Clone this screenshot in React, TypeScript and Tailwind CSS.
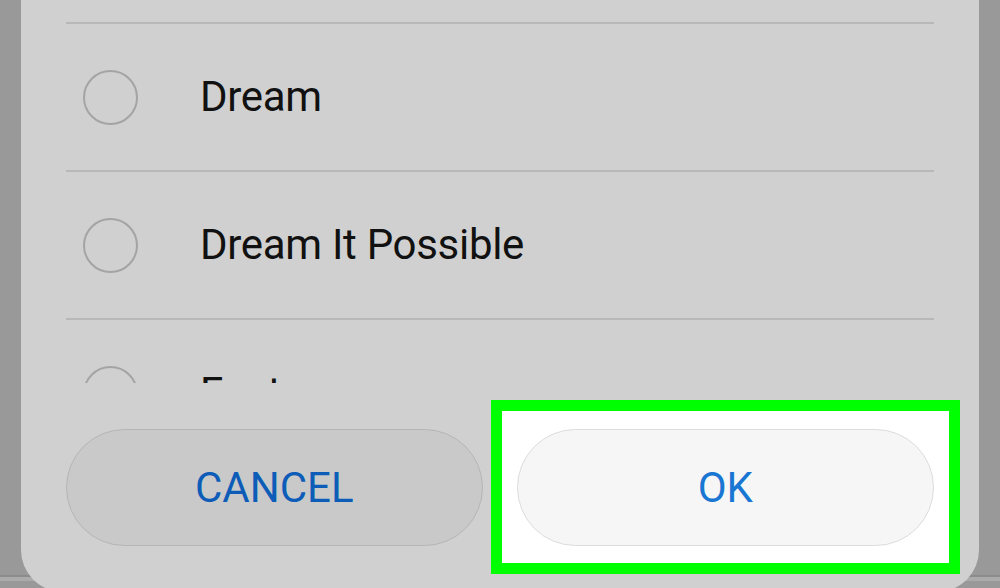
import React from "react";

const items = ["Dream", "Dream It Possible", "Fantasy"];

function Row({ label }: { label: string }) {
  return (
    <div className="h-[146px] flex items-center shrink-0">
      <div className="ml-[17px] w-[55px] h-[55px] rounded-full border-2 border-[#a4a4a4] shrink-0" />
      <div className="ml-[62px] text-[42px] leading-none text-[#111111] tracking-[-0.3px]">{label}</div>
    </div>
  );
}

export default function App() {
  return (
    <div
      className="relative w-[1000px] h-[588px] overflow-hidden bg-[#999999] flex"
      style={{ fontFamily: "Roboto, 'Liberation Sans', sans-serif" }}
    >
      <div className="absolute left-0 right-0 top-[575px] h-[2px] bg-[#8c8c8c]" />
      <div className="absolute left-0 right-0 top-[577px] h-[4px] bg-[#ababab]" />
      <div className="relative ml-[21px] w-[958px] h-[592px] shrink-0 bg-[#d0d0d0] rounded-b-[42px] flex flex-col">
        <div className="h-[383px] overflow-hidden px-[45px] pt-[22px] flex flex-col shrink-0">
          {items.map((it) => (
            <React.Fragment key={it}>
              <div className="h-[2px] bg-[#b8b8b8] shrink-0" />
              <Row label={it} />
            </React.Fragment>
          ))}
        </div>
        <div className="flex px-[45px] pt-[46px] gap-[34px]">
          <button className="w-[417px] h-[117px] rounded-full bg-[#c9c9c9] border border-[#b5b5b5] text-[42px] leading-none text-[#0c5cb8]">
            CANCEL
          </button>
          <div className="relative w-[418px] h-[117px]">
            <div className="absolute left-[-26px] right-[-26px] top-[-29px] bottom-[-28px] bg-white border-[11px] border-[#00ff00]" />
            <button className="relative w-full h-full rounded-full bg-[#f6f6f6] border border-[#dcdcdc] text-[42px] leading-none text-[#1976d2]">
              OK
            </button>
          </div>
        </div>
      </div>
    </div>
  );
}
